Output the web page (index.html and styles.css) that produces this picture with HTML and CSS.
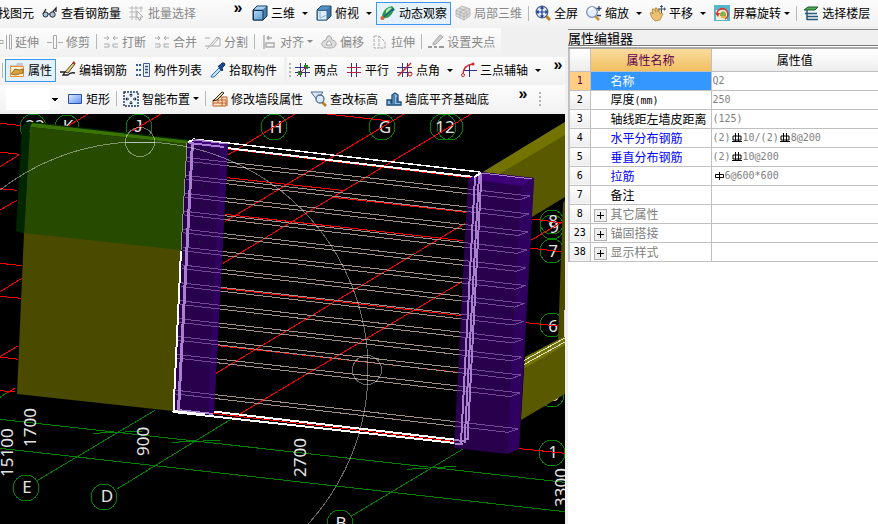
FILE: index.html
```html
<!DOCTYPE html>
<html lang="zh-CN">
<head>
<meta charset="utf-8">
<meta name="viewport" content="width=device-width, initial-scale=1">
<title>属性编辑器</title>
<link rel="stylesheet" href="styles.css">
</head>
<body>
<svg class="defs" aria-hidden="true">
  <defs>
    <linearGradient id="blueFace" x1="0" y1="0" x2="1" y2="1"><stop offset="0" stop-color="#b4d8f4"/><stop offset="1" stop-color="#5a9bd0"/></linearGradient>
    <linearGradient id="rectFill" x1="0" y1="0" x2="1" y2="1"><stop offset="0" stop-color="#e4eeff"/><stop offset="1" stop-color="#5c8df0"/></linearGradient>
    <symbol id="cube" viewBox="0 0 16 16"><path d="M1 5 5 1h10v10l-4 4H1z" fill="#4a7fb0" stroke="#15324c"/><path d="M1.500 5.500h9.500v9.500h-9.500z" fill="url(#blueFace)" stroke="#15324c"/><path d="M2 4.500 5.200 1.500h9L11 4.500z" fill="#a8d2f0"/></symbol>
    <symbol id="cubeTop" viewBox="0 0 16 16"><path d="M1 5 5 1h10v10l-4 4H1z" fill="#3e75a8" stroke="#1c4567"/><path d="M1.500 5.500h9.500v9.500h-9.500z" fill="#dcecf8" stroke="#3d6c92"/><path d="M2 4.500 5.200 1.500h9L11 4.500z" fill="#4f93c8"/><path d="M4 6v7m0 0 7-3" fill="none" stroke="#8db4d2"/></symbol>
    <symbol id="axes" viewBox="0 0 16 16"><path d="M5.500 1v14M10.500 1v14M0 5.500h15M0 10.500h15" stroke="#30308a" fill="none"/></symbol>
    <symbol id="lens" viewBox="0 0 16 16"><path d="m11 11 4 4" stroke="#b98324" stroke-width="3"/><circle cx="7" cy="7" r="5.800" fill="#e4eefc" stroke="#4b6288" stroke-width="1.300"/></symbol>
    <symbol id="split" viewBox="0 0 16 16"><path d="M1 4h5M4 2l2 2-2 2M15 4h-5M12 2l-2 2 2 2M1 10h5v3H1M15 10h-5v3h5" fill="none" stroke="#aaa"/></symbol>
    <symbol id="rebarBand" viewBox="0 0 12 10"><path d="M2 3h8v4H2zM4.500 0v9M7.500 0v9M1 8.500h10"/></symbol>
  </defs>
</svg>

<div class="app">
  <header class="bar bar-main">
    <div class="group group-a">
      <button class="tool tool-cut">找图元</button>
      <button class="tool"><svg viewBox="0 0 16 16"><path d="M1 9 4 4M9 9l5-6v4" stroke="#222" fill="none" stroke-width="1.300"/><circle cx="3.500" cy="9.500" r="2.500" fill="#a9c4d8" stroke="#223"/><circle cx="10.500" cy="9.500" r="2.700" fill="#a9c4d8" stroke="#223"/><path d="M6 9h2" stroke="#222"/></svg>查看钢筋量</button>
      <button class="tool" disabled><svg viewBox="0 0 16 16"><path d="M3 1v14M7 1v14M12 1v6M0 3h14M0 7h9M0 12h8" stroke="#bbb" fill="none"/><path d="m8 6 6 6-3 0 1 3-2 0-1-3-1 1z" fill="#fff" stroke="#aaa"/></svg>批量选择</button>
      <button class="more" aria-label="更多">»</button>
    </div>
    <div class="group">
      <button class="tool"><svg><use href="#cube"/></svg>三维<i class="caret"></i></button>
      <button class="tool"><svg><use href="#cubeTop"/></svg>俯视<i class="caret"></i></button>
      <button class="tool active"><svg viewBox="0 0 16 16"><path d="M9 2c4-2 6 1 4 5s-6 7-9 6-2-4 0-7 3-3 5-4z" fill="#2f9a48"/><path d="M6 5c3-3 5-3 6-2L6 9z" fill="#a9ebb0"/><path d="M1 14 13 4" stroke="#245c86" stroke-width="1.500"/><circle cx="2.500" cy="13" r="2" fill="#e85a2a"/><circle cx="13" cy="4.500" r="1.500" fill="#1b6478"/></svg>动态观察</button>
      <button class="tool" disabled><svg viewBox="0 0 16 16"><path d="m1 5 6-4 8 3v7l-6 4-8-4z" fill="#ddd" stroke="#bbb"/><path d="m1 5 8 4 6-5M9 9v6M4 3l8 4v6M12 3 5 7v6M1 8l8 4 6-4" fill="none" stroke="#b3b3b3"/></svg>局部三维</button>
      <i class="sep"></i>
      <button class="tool"><svg viewBox="0 0 16 16"><use href="#lens"/><path d="M7 2v10M2 7h10M5.500 3.500 7 2l1.500 1.500M5.500 10.500 7 12l1.500-1.500M3.500 5.500 2 7l1.500 1.500M10.500 5.500 12 7l-1.500 1.500" fill="none" stroke="#1d3f94" stroke-width="1.200"/></svg>全屏</button>
      <button class="tool"><svg viewBox="0 0 16 16"><path d="m9 11 4 4" stroke="#c99434" stroke-width="2.500"/><circle cx="6" cy="7" r="5.300" fill="#e4eefc" stroke="#7d93b8" stroke-width="1.300"/><path d="M3 6q1-3 4-3" stroke="#fff" stroke-width="2" fill="none"/><path d="M13 1v5M10.500 3.500h5M11 10.500h4" stroke="#33466b" stroke-width="1.300" fill="none"/></svg>缩放<i class="caret"></i></button>
      <button class="tool"><svg viewBox="0 0 16 16"><path d="M2 13 0 8l2-1 1 2-1-5h2l2 3-1-4h2l1 4 1-3 1 1v4l2-1 1 1-3 6-5 1z" fill="#ebc070" stroke="#aa8035" stroke-width=".7"/><path d="M11.500 0v8M8 4h8M10 1.500h3M14.500 2.500v3" stroke="#44566b" fill="none"/></svg>平移<i class="caret"></i></button>
      <button class="tool"><svg viewBox="0 0 16 16"><path d="M0 0h16v16H0z" fill="#52b8ce"/><path d="M2 5h11v10H2z" fill="#f8eed6"/><path d="M3 10a5.500 5.500 0 1 1 8 4" fill="none" stroke="#e0382c" stroke-width="1.700"/><path d="m1 8 3 4 2-4z" fill="#e0382c"/><path d="m6 8 3-2 3 2v3H6z" fill="#8dae4c"/><path d="M7 11h5v2H7z" fill="#e4b050"/></svg>屏幕旋转<i class="caret near"></i></button>
      <i class="sep"></i>
      <button class="tool"><svg viewBox="0 0 16 16"><path d="m1 5 4-3h10l-3 3z" fill="#4fae58" stroke="#1d5b30"/><path d="M4 5v10M2 8.500h12M4 11.500h11M4 14.500h11" stroke="#29577c" stroke-width="1.500"/></svg>选择楼层</button>
    </div>
  </header>

  <main class="work">
    <section class="left">
      <div class="bar bar-edit">
        <div class="group group-cut">
          <button class="tool" disabled><svg viewBox="0 0 16 16"><path d="M0 6.500h7v3H0M10.500 1v14M13.500 1h2v14h-2z" fill="none" stroke="#aaa"/></svg>延伸</button>
          <button class="tool" disabled><svg viewBox="0 0 16 16"><path d="M0 8.500h5M11 8.500h5M6.500 1.500h3v13h-3z" fill="none" stroke="#aaa"/></svg>修剪</button>
          <i class="sep"></i>
          <button class="tool" disabled><svg><use href="#split"/></svg>打断</button>
          <button class="tool" disabled><svg><use href="#split"/></svg>合并</button>
          <button class="tool" disabled><svg viewBox="0 0 16 16"><path d="M0 4h5M0 12h15M11 4h4v8M2 15 12 3l2 1L7 12" fill="none" stroke="#aaa"/></svg>分割</button>
          <i class="sep"></i>
          <button class="tool" disabled><svg viewBox="0 0 16 16"><path d="M3 1v14M6 4h5M6 4l2-2M6 4l2 2M5 9h8v4H5z" fill="none" stroke="#aaa" stroke-width="1.400"/></svg>对齐<i class="caret near"></i></button>
          <button class="tool" disabled><svg viewBox="0 0 16 16"><path d="M6 3q2-3 4 0l1 3q5 1 4 5-1 3-7 3t-7-3q-1-4 4-5zM7 7l-2 4h6L9 7z" fill="#ddd" stroke="#aaa"/></svg>偏移</button>
          <button class="tool" disabled><svg viewBox="0 0 16 16"><path d="M2 2h5v12H2zM7 2l6 6v6H7" fill="none" stroke="#aaa" stroke-dasharray="3 1"/></svg>拉伸</button>
          <i class="sep"></i>
          <button class="tool" disabled><svg viewBox="0 0 16 16"><path d="M0 13h4M6 13h3M11 13h5" stroke="#999" stroke-width="2"/><path d="M5 9 12 1l3 2-7 7-3 1z" fill="#ccc" stroke="#aaa"/></svg>设置夹点</button>
        </div>
      </div>

      <div class="bar bar-view">
        <div class="group group-sep">
          <i class="sep"></i>
          <button class="tool active"><svg viewBox="0 0 16 16"><path d="M1 3h6l1-2h6v4H1z" fill="#c7c7c7"/><path d="M1.500 4.500h13v10h-13z" fill="#fff3da" stroke="#f28a2e"/><path d="m2 12 4-5 4 1 4-1v4l-4 1-3 1z" fill="#d9a33c" stroke="#7c5411" stroke-width=".8"/></svg>属性</button>
          <button class="tool"><svg viewBox="0 0 16 16"><path d="m5 10 8-9 2 1-7 9z" fill="#e5d080" stroke="#5b4a28"/><path d="M0 10h5l-2 3h5q2-3 7-2" fill="none" stroke="#222" stroke-width="1.300"/><path d="m13 0 2 2" stroke="#b62323" stroke-width="2"/></svg>编辑钢筋</button>
          <button class="tool"><svg viewBox="0 0 16 16"><path d="M1 3h5M1 8h5M1 13h5" stroke="#345b9b" stroke-width="2" stroke-dasharray="2 1"/><path d="M8.500 1.500h6v13h-6z" fill="#e9f0ff" stroke="#425e9d"/><path d="M10 4.500h3M10 7.500h3M10 10.500h3" stroke="#3f4f6e" stroke-width="1.500"/></svg>构件列表</button>
          <button class="tool"><svg viewBox="0 0 16 16"><path d="m2 13 7-7 2 2-7 7-3 0z" fill="#bfe1fb" stroke="#2871b7"/><path d="m8 4 4 5 1-1-1-2 3-3q0-3-3-2L9 4z" fill="#174b97" stroke="#123569"/></svg>拾取构件</button>
        </div>
        <div class="group group-axis">
          <i class="grip"></i>
          <button class="tool"><svg viewBox="0 0 16 16"><use href="#axes"/><path d="m2 14 11-11" stroke="#c23"/><path d="M9 4h3v3M4 9v3h3" fill="none" stroke="#258325" stroke-width="2"/></svg>两点</button>
          <button class="tool"><svg viewBox="0 0 16 16"><path d="M5.500 1v14M10.500 1v14" stroke="#30308a"/><path d="M1 5.500h14M1 10.500h14" stroke="#b52345"/></svg>平行</button>
          <button class="tool"><svg viewBox="0 0 16 16"><use href="#axes"/><path d="M1 14 14 1" stroke="#d12626" stroke-width="1.400"/><circle cx="13" cy="12" r="2" fill="none" stroke="#d12626"/></svg>点角<i class="caret"></i></button>
          <button class="tool"><svg viewBox="0 0 16 16"><path d="M8.500 3v12M3 8.500h13" stroke="#30308a"/><path d="M2 13Q2 3 12 2" fill="none" stroke="#d12626" stroke-width="1.400"/><circle cx="2" cy="13" r="1.500" fill="#fff" stroke="#d12626"/><circle cx="12" cy="2" r="1.500" fill="#d12626"/></svg>三点辅轴<i class="caret"></i></button>
          <button class="more" aria-label="更多">»</button>
        </div>
      </div>

      <div class="bar bar-draw">
        <div class="group group-draw">
          <select class="picker" aria-label="构件"><option></option></select>
          <button class="tool"><svg viewBox="0 0 16 16"><path d="M1.500 3.500h13v9h-13z" fill="url(#rectFill)" stroke="#2d51a8"/></svg>矩形</button>
          <i class="sep"></i>
          <button class="tool"><svg viewBox="0 0 16 16"><path d="M1 1h14v14H1z" fill="#edf5ff" stroke="#233c66" stroke-width="1.500" stroke-dasharray="2 1"/><path d="M8 3v3M8 10v3M3 8h3M10 8h3M6.500 4 8 3l1.500 1M6.500 12 8 13l1.500-1M4 6.500 3 8l1 1.500M12 6.500 13 8l-1 1.500" stroke="#111" fill="none"/></svg>智能布置<i class="caret near"></i></button>
          <i class="sep"></i>
          <button class="tool"><svg viewBox="0 0 16 16"><path d="M1 9h13v6H1zM5 6h10v9" fill="#fae2c5" stroke="#c05e24"/><path d="M1 12h13M6 9v3M10 12v3M10 6v6" stroke="#c05e24"/><path d="m3 8 7-7 2 1-7 7-4 1z" fill="#eee3ad" stroke="#292519"/></svg>修改墙段属性</button>
          <button class="tool"><svg viewBox="0 0 16 16"><path d="M0 1h12L6 9z" fill="#dae8f8" stroke="#4e6c98"/><path d="m11 11 4 4" stroke="#b97c20" stroke-width="2.500"/><circle cx="9" cy="8" r="4" fill="#d8ecfb" stroke="#526c90" stroke-width="1.300"/></svg>查改标高</button>
          <button class="tool"><svg viewBox="0 0 16 16"><path d="M1 14V9h4v3h1V4l3-2 3 2v7h3v3z" fill="#8fb9e0" stroke="#174878" stroke-width="1.300"/><path d="M8 4v9M11 6v6" stroke="#174878"/></svg>墙底平齐基础底</button>
          <button class="more" aria-label="更多">»</button>
        </div>
        <div class="group group-tail"><i class="grip"></i></div>
      </div>

      <svg class="scene" viewBox="0 114 565 410" role="img" aria-label="三维视图">
        <defs>
          <path id="bar" d="M187 157.500 530 196 520 199.700 187 161.200"/>
          <g id="bars" fill="none">
            <use href="#bar"/>
            <use href="#bar" transform="translate(-.9 17.900)"/>
            <use href="#bar" transform="translate(-1.800 35.800)"/>
            <use href="#bar" transform="translate(-2.700 53.700)"/>
            <use href="#bar" transform="translate(-3.600 71.600)"/>
            <use href="#bar" transform="translate(-4.500 89.500)"/>
            <use href="#bar" transform="translate(-5.400 107.400)"/>
            <use href="#bar" transform="translate(-6.300 125.300)"/>
            <use href="#bar" transform="translate(-7.200 143.200)"/>
            <use href="#bar" transform="translate(-8.100 161.100)"/>
            <use href="#bar" transform="translate(-9 179)"/>
            <use href="#bar" transform="translate(-9.900 196.900)"/>
            <use href="#bar" transform="translate(-11.700 232.700)"/>
          </g>
          <clipPath id="columns"><path d="M187 142 228 144 214 412 173 412zM468 179 481 172 534 178 519 449 507 454 454 448z"/></clipPath>
        </defs>
        <rect y="114" width="565" height="410" fill="#000"/>

        <g class="lines" stroke="#008200">
          <path d="M0 419.300 565 482.300M0 448.300 565 511.700M93 433.300 142 431.300M172 442.300 220 440.300M407 469.300 456 466.300M155 410.300 37 480.700M233 418 117 489M463 449 351 516.300M0 397.300 10 391"/>
          <circle cx="33" cy="127" r="13"/><circle cx="67" cy="127" r="12"/><circle cx="139" cy="127" r="13"/><circle cx="274" cy="127" r="13"/><circle cx="382" cy="127" r="13"/>
          <circle cx="443" cy="127" r="13"/><circle cx="450" cy="127" r="13"/><circle cx="552" cy="222" r="12"/><circle cx="552" cy="227" r="12"/><circle cx="552" cy="251" r="12"/>
          <circle cx="552" cy="325" r="12"/><circle cx="552" cy="395" r="12"/><circle cx="552" cy="453" r="13"/><circle cx="26" cy="488" r="13"/><circle cx="104" cy="497" r="13"/><circle cx="340" cy="523" r="13"/>
        </g>

        <g class="labels">
          <text x="35" y="132">22</text><text x="68" y="132">K</text><text class="plain" x="138" y="132">J</text><text x="276" y="133">H</text><text x="385" y="133">G</text><text x="445" y="133">12</text>
          <text x="553" y="227">8</text><text x="554" y="233">9</text><text x="553" y="257">7</text><text x="553" y="332">6</text><text x="554" y="401">5</text><text x="553" y="458">1</text>
          <text x="27" y="493">E</text><text x="107" y="502">D</text><text x="341" y="529">B</text>
        </g>
        <g class="labels dims">
          <text transform="translate(36 447) rotate(-90)">1700</text>
          <text transform="translate(13 477) rotate(-90)">15100</text>
          <text transform="translate(149 456) rotate(-90)">900</text>
          <text transform="translate(306 477) rotate(-90)">2700</text>
          <text transform="translate(567 507) rotate(-90)">3300</text>
        </g>

        <path class="lines" stroke="#f00" d="M0 123.300 21 125.500M0 152 19 154.300M0 166.700 19 155M0 188.700 17 190.300M0 210 17 200.300M0 263.300 22 265.700M0 291.700 22 278.300M0 296.300 21 298.300M0 356.700 18 346M0 357 18 359.300M0 390.700 15 392M7 393 15 388M68 126 88 114M132 131 161 114M228 155 295 114M225 221.700 404 114M223 263.300 471 114M216 373.300 465 223.300M233 418 462 281.700M227 177.700 345 190.700M333 197.300 466 212.300M225 214.300 463 240.700M221 288.300 462 315.700M218 345.700 458 372.300M327 114 390 121M228 149 473 178M532 219 563 223M530 240.700 563 221.700M530 248 563 252M526 322.700 558 326M516 448.300 565 453.300M210 413 455 441.500"/>

        <path fill="#595900" d="M483 172 565 122V197L532 217zM524 369 565 344V394L521 420z"/>
        <path fill="#737300" d="M483 172 565 122V135L499 174zM525 357 565 336V345L524 369z"/>
        <path fill="#4b4b00" d="M565 200 563 203 558 340 565 336z"/>
        <path class="lines" stroke="#deded0" d="M524 360.500 565 338M524 364.500 565 342M564.500 310V337"/>

        <path fill="#002600" d="M22 126 26 122 34 122 193 140 187 144 30 128 24 234 16 231z"/>
        <path fill="#3b7300" d="M32 123 190 141 187 144 30 127z"/>
        <path fill="#264b00" d="M30 127 188 144 181 251 24 234z"/>
        <path fill="#4b4b00" d="M24 233 181 250 173 411 17 394z"/>

        <use class="lines" href="#bars" stroke="#a09088"/>
        <g class="lines" stroke="#fff">
          <path stroke-width="1.500" d="M193 139 480 172"/>
          <path stroke-width="2" d="M213 411.500 462 440.500M173 412 464 444M188 143.500 474 177"/>
        </g>

        <path fill="#28004b" d="M187 143 193 140 228 144 214 413 208 415 173 411zM468 179 481 172 534 178 519 449 507 454 454 448z"/>
        <path fill="#300060" d="M220 149 228 144 214 413 208 415zM521 186 534 178 519 449 507 454z"/>
        <path fill="#3e0078" d="M187 144 193 139 228 144 223 149zM468 179 481 172 534 178 521 186z"/>
        <path class="lines" stroke="#082818" d="M204 165v3M202 184v3M201 203v3M200 221v3M199 240v3"/>
        <g clip-path="url(#columns)"><use class="lines" href="#bars" stroke="#764698"/></g>
        <g class="lines" stroke="#a97fd0">
          <path stroke-width="3" d="M192.500 142 178.500 410"/>
          <path stroke-width="2" d="M189 143 224 147M178 410 213 414M475 177 461 443M479 175 464.500 443M481.500 173 467.500 440M455 440 463 441 468 438M455 444 463 444"/>
          <path stroke="#8a9c86" d="M187 143 181 250"/>
          <path d="M193 140 228 144M482 173 532 179"/>
        </g>
        <path class="lines" stroke="#fff" stroke-width="2" d="M181 251 173.500 411 205 414.500M188 142 193 140M474 177 481 173"/>

        <g class="lines" stroke="#fff" stroke-opacity=".42">
          <circle cx="140" cy="370" r="228"/><circle cx="140" cy="142" r="14.500"/><circle cx="367" cy="370" r="14.500"/><path d="M126 142.500h29"/>
        </g>
      </svg>
    </section>

    <aside class="panel">
      <h1 class="panel-title">属性编辑器</h1>
      <table class="props">
        <colgroup><col class="c-no"><col class="c-name"><col></colgroup>
        <thead><tr><th></th><th class="picked">属性名称</th><th>属性值</th></tr></thead>
        <tbody>
          <tr class="current"><th>1</th><td class="name">名称</td><td>Q2</td></tr>
          <tr><th>2</th><td class="name">厚度<span class="unit">(mm)</span></td><td>250</td></tr>
          <tr><th>3</th><td class="name">轴线距左墙皮距离</td><td>(125)</td></tr>
          <tr><th>4</th><td class="name link">水平分布钢筋</td><td>(2)<svg class="rebar"><use href="#rebarBand"/></svg>10/(2)<svg class="rebar"><use href="#rebarBand"/></svg>8@200</td></tr>
          <tr><th>5</th><td class="name link">垂直分布钢筋</td><td>(2)<svg class="rebar"><use href="#rebarBand"/></svg>10@200</td></tr>
          <tr><th>6</th><td class="name link">拉筋</td><td><svg class="rebar" viewBox="0 0 12 10"><path d="M2.500 3.500h8v3h-8zM6.500 1v8"/></svg>6@600*600</td></tr>
          <tr><th>7</th><td class="name">备注</td><td></td></tr>
          <tr><th>8</th><td class="name fold"><button class="expand" aria-label="展开其它属性"></button>其它属性</td><td></td></tr>
          <tr><th>23</th><td class="name fold"><button class="expand" aria-label="展开锚固搭接"></button>锚固搭接</td><td></td></tr>
          <tr><th>38</th><td class="name fold"><button class="expand" aria-label="展开显示样式"></button>显示样式</td><td></td></tr>
        </tbody>
      </table>
    </aside>
  </main>
</div>
</body>
</html>
```
FILE: styles.css
```css
* { box-sizing: border-box; }

body {
  margin: 0;
  background: #f0f0f0;
  color: #000;
  font: 12px/16px "Noto Sans CJK SC", sans-serif;
  overflow: hidden;
}

button { font: inherit; color: inherit; }

.defs { position: absolute; width: 0; height: 0; }

.app { min-height: 100vh; display: flex; flex-direction: column; }

/* Toolbars */
.bar {
  display: flex;
  align-items: stretch;
  overflow: hidden;
  padding-bottom: 2px;
}
.bar-main, .bar-view { height: 28px; }
.bar-edit, .bar-draw { height: 29px; }

.group {
  display: flex;
  align-items: center;
  flex: none;
  background: linear-gradient(#fcfcfc, #f2f2f2);
}
.group-a { width: 248px; }
.group-a .more { margin: 0 3px 0 auto; }
.bar-main .group:last-child { flex: 1 0 auto; }
.group-cut { margin-left: -8px; padding-right: 2px; }
.group-sep { padding-right: 3px; }
.group-axis { margin-left: 3px; flex: 1 0 0; }
.group-axis .grip { margin-right: 0; }
.group-draw { flex: 1 0 0; }
.group-draw .more, .group-axis .more { margin-left: auto; }
.group-draw .more { margin-right: 5px; }
.group-tail { width: 30px; padding-left: 2px; }

.tool {
  display: flex;
  align-items: center;
  gap: 3px;
  height: 23px;
  padding: 0 3px;
  border: 1px solid transparent;
  background: none;
  white-space: nowrap;
}
.tool svg { width: 16px; height: 16px; flex: none; overflow: visible; }
.tool:disabled { color: #888; }
.tool-cut { margin-left: -6px; }
.tool.active { border-color: #3a97f5; background: #e5f1fb; }

.caret {
  margin: 0 0 0 4px;
  border: 3px solid transparent;
  border-top-color: currentColor;
  border-bottom: 0;
}
.caret.near { margin-left: 0; }

.sep {
  width: 1px;
  height: 15px;
  margin: 0 2px;
  background: #b8b8b8;
}

.grip {
  width: 2px;
  height: 14px;
  margin: 0 2px;
  background: repeating-linear-gradient(#b4b4b4 0 2px, transparent 2px 4px);
}

.more {
  width: 14px;
  height: 24px;
  padding: 0 0 10px;
  border: 0;
  background: none;
  font: bold 16px/12px "Liberation Sans", sans-serif;
}

.picker {
  appearance: none;
  width: 55px;
  height: 22px;
  margin: 0 2px 0 6px;
  border: 0;
  border-radius: 0;
  background-color: #fff;
  background-image:
    linear-gradient(45deg, transparent 50%, #000 50%),
    linear-gradient(-45deg, transparent 50%, #000 50%),
    linear-gradient(#f8f8f8, #f8f8f8);
  background-size: 3px 3px, 3px 3px, 11px 100%;
  background-position: 46px 10px, 49px 10px, right top;
  background-repeat: no-repeat;
}

/* Work area */
.work {
  display: grid;
  grid-template-columns: minmax(0, 565fr) minmax(0, 310fr);
  gap: 3px;
  flex: 1;
}
.left { min-width: 0; }

.scene { display: block; width: 100%; }
.lines { fill: none; shape-rendering: crispEdges; }
.labels { fill: #e4e4e4; font: 17px "Noto Sans", sans-serif; text-anchor: middle; }
.plain { font-family: "Liberation Sans", sans-serif; }
.dims { text-anchor: start; }

/* Property panel */
.panel {
  display: flex;
  flex-direction: column;
  background: #fff;
}
.panel-title {
  margin: 0;
  height: 17px;
  border: solid #777;
  border-width: 1px 0;
  border-top-color: #888;
  background: #f0f0f0;
  font: 13px/15px "Noto Sans CJK SC", sans-serif;
}
.panel { padding-top: 1px; background: linear-gradient(#f0f0f0 1px, #fff 1px); }

.props {
  width: 100%;
  border-collapse: collapse;
  table-layout: fixed;
  border-top: 2px solid #a8a8a8;
  border-left: 2px solid #c0c0c0;
  margin-top: 1px;
}
.c-no { width: 21px; }
.c-name { width: 121px; }

.props th, .props td {
  height: 19px;
  padding: 0;
  border-right: 1px solid #c0c0c0;
  border-bottom: 1px solid #c0c0c0;
  font-weight: 400;
  line-height: 16px;
  white-space: nowrap;
  overflow: hidden;
}
.props td:last-child, .props thead th:last-child { border-right: 0; }
.props thead th { height: 23px; background: linear-gradient(#fff, #ededed); }
.props thead .picked { background: linear-gradient(#fadb9e, #f0bf5f); color: #600050; }
.props tbody th {
  background: linear-gradient(#fff, #ededed);
  font: 10px/16px "DejaVu Sans Mono", monospace;
}
.props td {
  padding-left: 1px;
  color: #808080;
  font: 10px/16px "DejaVu Sans Mono", monospace;
}
.props .name {
  padding-left: 20px;
  color: #000;
  font: 12px/16px "Noto Sans CJK SC", sans-serif;
}
.props .unit { font: 10px/16px "DejaVu Sans Mono", monospace; }
.props .link { color: #00f; }
.props .fold { padding-left: 3px; color: #808080; }
.props .current th { background: #ffcf83; color: #600050; }
.props .current .name { background: #3397ff; color: #fff; }

.rebar {
  width: 12px;
  height: 10px;
  vertical-align: -2px;
  fill: none;
  stroke: #000;
}

.expand {
  width: 13px;
  height: 13px;
  margin: 0 4px 0 0;
  padding: 0;
  border: 1px solid #b0b0b0;
  vertical-align: -2px;
  background:
    linear-gradient(#000, #000) center / 7px 1px no-repeat,
    linear-gradient(#000, #000) center / 1px 7px no-repeat,
    #eee;
}
```
